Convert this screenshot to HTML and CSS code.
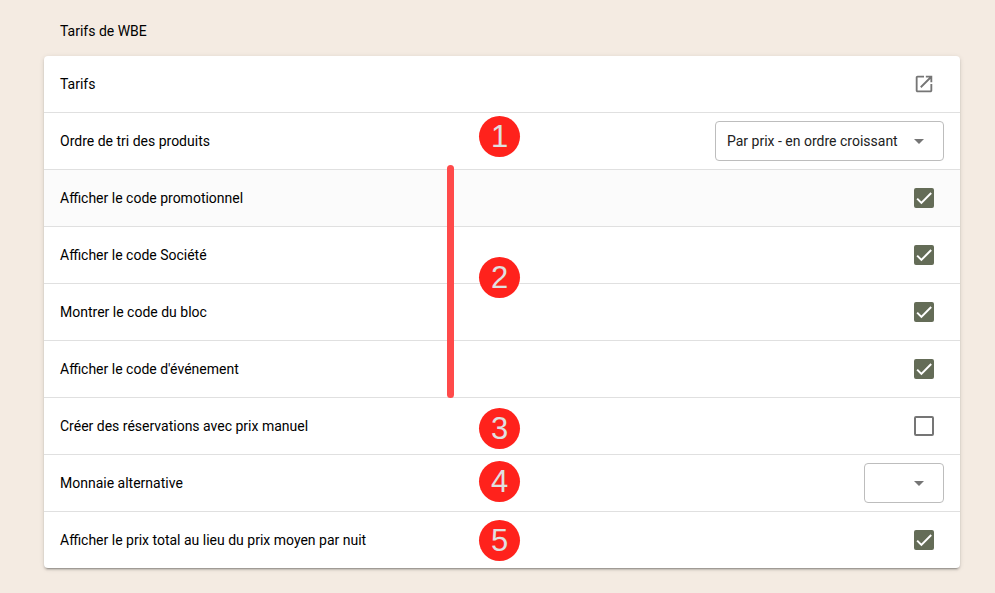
FILE: index.html
```html
<!DOCTYPE html>
<html lang="fr">
<head>
    <meta charset="UTF-8">
    <meta name="viewport" content="width=device-width, initial-scale=1.0">
    <title>Tarifs de WBE</title>
    <link rel="stylesheet" href="styles.css">
</head>
<body>
    <main class="settings">
        <h2>Tarifs de WBE</h2>
        <div class="card">
            <div class="row">
                <span>Tarifs</span>
                <a class="open-link" href="#tarifs" aria-label="Ouvrir les tarifs">
                    <svg viewBox="0 0 24 24"><path d="M19 19H5V5h7V3H5c-1.11 0-2 .9-2 2v14c0 1.1.89 2 2 2h14c1.1 0 2-.9 2-2v-7h-2v7zM14 3v2h3.59l-9.83 9.83 1.41 1.41L19 6.41V10h2V3h-7z"/></svg>
                </a>
            </div>
            <div class="row">
                <label for="sort_order">Ordre de tri des produits</label>
                <div class="select">
                    <select name="sort_order" id="sort_order">
                        <option>Par prix - en ordre croissant</option>
                    </select>
                </div>
            </div>
            <div class="row active">
                <label for="promo_code">Afficher le code promotionnel</label>
                <div class="checkbox">
                    <input type="checkbox" id="promo_code" checked>
                    <svg viewBox="0 0 24 24"><path d="M1.73 12.91 8.1 19.28 22.79 4.59"/></svg>
                </div>
            </div>
            <div class="row">
                <label for="company_code">Afficher le code Société</label>
                <div class="checkbox">
                    <input type="checkbox" id="company_code" checked>
                    <svg viewBox="0 0 24 24"><path d="M1.73 12.91 8.1 19.28 22.79 4.59"/></svg>
                </div>
            </div>
            <div class="row">
                <label for="block_code">Montrer le code du bloc</label>
                <div class="checkbox">
                    <input type="checkbox" id="block_code" checked>
                    <svg viewBox="0 0 24 24"><path d="M1.73 12.91 8.1 19.28 22.79 4.59"/></svg>
                </div>
            </div>
            <div class="row">
                <label for="event_code">Afficher le code d'événement</label>
                <div class="checkbox">
                    <input type="checkbox" id="event_code" checked>
                    <svg viewBox="0 0 24 24"><path d="M1.73 12.91 8.1 19.28 22.79 4.59"/></svg>
                </div>
            </div>
            <div class="row">
                <label for="manual_price">Créer des réservations avec prix manuel</label>
                <div class="checkbox">
                    <input type="checkbox" id="manual_price">
                    <svg viewBox="0 0 24 24"><path d="M1.73 12.91 8.1 19.28 22.79 4.59"/></svg>
                </div>
            </div>
            <div class="row">
                <label for="currency">Monnaie alternative</label>
                <div class="select">
                    <select name="currency" id="currency">
                        <option></option>
                    </select>
                </div>
            </div>
            <div class="row">
                <label for="total_price">Afficher le prix total au lieu du prix moyen par nuit</label>
                <div class="checkbox">
                    <input type="checkbox" id="total_price" checked>
                    <svg viewBox="0 0 24 24"><path d="M1.73 12.91 8.1 19.28 22.79 4.59"/></svg>
                </div>
            </div>

            <!-- Numbered markers over the rows -->
            <div class="marker-line"></div>
            <span class="marker marker-1">1</span>
            <span class="marker marker-2">2</span>
            <span class="marker marker-3">3</span>
            <span class="marker marker-4">4</span>
            <span class="marker marker-5">5</span>
        </div>
    </main>
</body>
</html>
```
FILE: styles.css
```css
/* General Styling */
body {
    font-family: Roboto, 'Liberation Sans', sans-serif;
    font-size: 14px;
    line-height: 20px;
    margin: 0;
    color: #000;
    background: #f4ebe2;
}

.settings {
    padding: 21px 35px 24px 44px;
}

h2 {
    font-size: 14px;
    font-weight: 400;
    margin: 0 16px 15px;
}

.card {
    position: relative;
    background: #fff;
    border-radius: 4px;
    box-shadow: 0 3px 1px -2px rgba(0, 0, 0, 0.2), 0 2px 2px rgba(0, 0, 0, 0.14), 0 1px 5px rgba(0, 0, 0, 0.12);
}

.row {
    display: flex;
    align-items: center;
    justify-content: space-between;
    height: 56px;
    padding: 0 16px;
}

.row + .row {
    border-top: 1px solid #e0e0e0;
}

.row.active {
    background: #fbfbfb;
}

.open-link {
    height: 22px;
    margin-right: 9px;
}

.open-link svg {
    display: block;
    width: 22px;
    height: 22px;
    fill: #757575;
}

/* Drop-downs */
.select {
    position: relative;
}

.select select {
    appearance: none;
    display: block;
    min-width: 80px;
    height: 40px;
    padding: 0 45px 0 11px;
    border: 1px solid #bdbdbd;
    border-radius: 4px;
    background: #fff;
    font: inherit;
    color: #212121;
}

.select::after {
    content: "";
    position: absolute;
    top: 18px;
    right: 20px;
    border: 5px solid transparent;
    border-top-color: #757575;
    border-bottom: 0;
    pointer-events: none;
}

/* Checkboxes */
.checkbox {
    display: grid;
    place-items: center;
    margin-right: 10px;
}

.checkbox input,
.checkbox svg {
    grid-area: 1 / 1;
}

.checkbox input {
    appearance: none;
    width: 20px;
    height: 20px;
    margin: 0;
    border: 2px solid #757575;
    border-radius: 2px;
}

.checkbox input:checked {
    border-color: #646c57;
    background: #646c57;
}

.checkbox svg {
    width: 16px;
    height: 16px;
    fill: none;
    stroke: #fff;
    stroke-width: 3;
    pointer-events: none;
    visibility: hidden;
}

.checkbox input:checked + svg {
    visibility: visible;
}

/* Markers */
.marker {
    position: absolute;
    left: calc(50% - 23px);
    width: 41px;
    height: 41px;
    border-radius: 50%;
    background: #ff221c;
    color: #e0e0e0;
    font-family: 'Liberation Sans', Arial, sans-serif;
    font-size: 31px;
    line-height: 41px;
    text-align: center;
}

.marker-1 { top: 60px; }
.marker-2 { top: 201px; }
.marker-3 { top: 352px; }
.marker-4 { top: 405px; }
.marker-5 { top: 464px; }

.marker-line {
    position: absolute;
    top: 109px;
    left: calc(50% - 55px);
    width: 7px;
    height: 233px;
    border-radius: 4px;
    background: #ff4a4a;
}
```
